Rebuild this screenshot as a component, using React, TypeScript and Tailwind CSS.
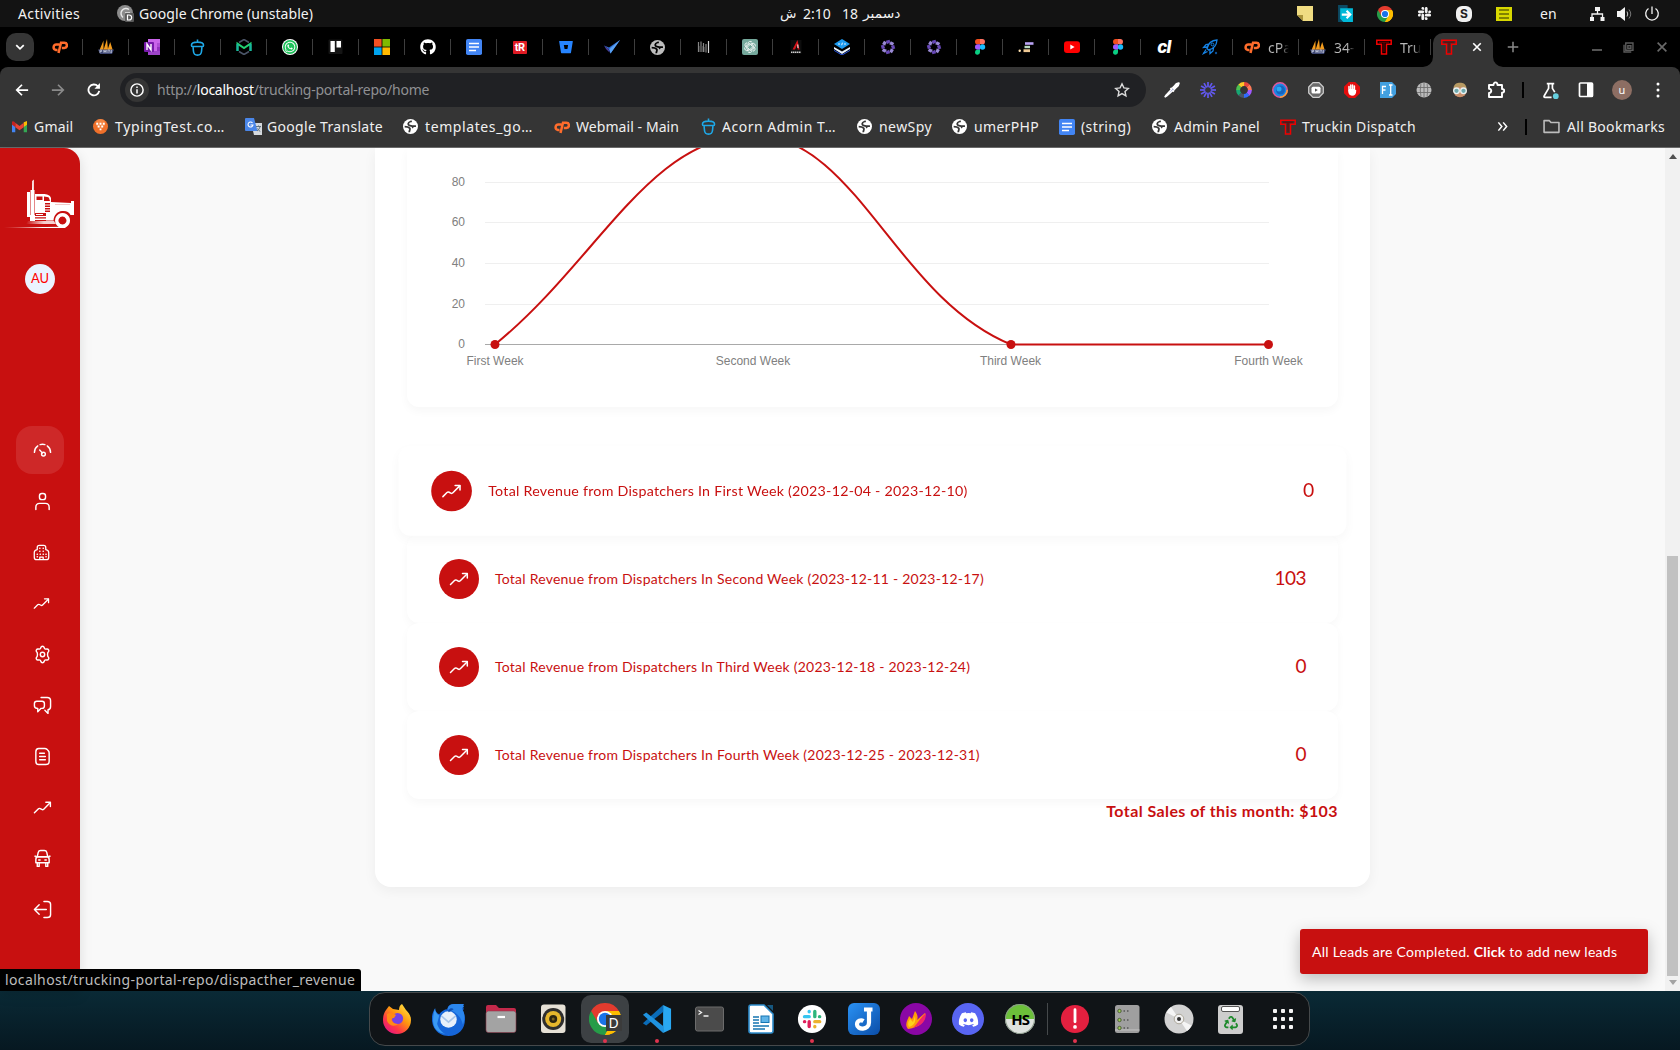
import React from "react";
import type { ReactNode } from "react";
import { FaWhatsapp, FaGithub, FaBitbucket, FaDiscord, FaRecycle, FaSlack } from "react-icons/fa";

type P = { s?: number; vb?: string; children?: ReactNode; className?: string };
const S = ({ s = 16, vb = "0 0 16 16", children, className = "" }: P) => (
  <svg width={s} height={s} viewBox={vb} fill="none" className={`shrink-0 ${className}`}>{children}</svg>
);

/* ---------- favicons ---------- */
const CP = () => (
  <S><path d="M7.400 5.600H4.300a2.700 2.700 0 0 0-.7 5.300h1.900M6.500 14 9 3.700h3.300a2.500 2.500 0 0 1 0 5.200h-2.500" stroke="#ff6c2c" strokeWidth="2.500" /></S>
);
const Boat = () => (
  <S>
    <path d="M5.5 1.5 1.5 11h4zM9 0 5.5 11H10zM12.2 3 9.5 11h5.2z" fill="#f29b1d" />
    <path d="M0 10.5h16l-2 4.5H2z" fill="#3d4672" />
    <path d="M2 14v-3h1.6v1.5H2M6 14v-3v1.5h2V11v3M10 14v-3h1.6l.6 3M13.4 11v3" stroke="#c3c8dc" strokeWidth=".8" />
  </S>
);
const OneNote = () => (
  <S>
    <path d="M4 0h12v16H4z" fill="#ca64ea" />
    <path d="M13 4h3v4h-3z" fill="#ae4bd5" /><path d="M13 8h3v4h-3z" fill="#9332bf" /><path d="M4 12h12v4H4z" fill="#7e2fb0" opacity=".6" />
    <rect y="3" width="10" height="10" rx="1" fill="#7719aa" />
    <path d="M3 11V5l4 6V5" stroke="#fff" strokeWidth="1.4" />
  </S>
);
const Acorn = ({ s = 17 }: { s?: number }) => (
  <S s={s}>
    <path d="M8 .5v2.4M2.300 5.800c0-2 1.800-2.900 5.700-2.900s5.700.9 5.700 2.900c0 .9-.5 1.300-1.500 1.300H3.800c-1 0-1.500-.4-1.500-1.300ZM3.800 7.300l.4 4.200c.2 2.400 1.400 3.700 3.800 3.700s3.600-1.300 3.800-3.700l.4-4.200" stroke="#1ea8e7" strokeWidth="1.500" />
  </S>
);
const Mail = () => (
  <S>
    <path d="m3 3.500 5-3 5 3M3 12.500l5 3 5-3" stroke="#4b5568" strokeWidth="1.6" />
    <path d="M1.500 12V4.6L8 9l6.500-4.400V12" stroke="#22d172" strokeWidth="2" /><path d="M1.500 12V5M14.500 5v7" stroke="#17b3a3" strokeWidth="2" />
  </S>
);
const Windows = () => (
  <S>
    <path d="M0 0h7.600v7.600H0z" fill="#f25022" /><path d="M8.400 0H16v7.600H8.400z" fill="#7fba00" />
    <path d="M0 8.400h7.600V16H0z" fill="#00a4ef" /><path d="M8.400 8.400H16V16H8.400z" fill="#ffb900" />
  </S>
);
const Docs = () => (
  <S><rect width="16" height="16" rx="1.800" fill="#4285f4" /><path d="M3 4.500h10M3 8h10M3 11.500h7" stroke="#fff" strokeWidth="1.700" /></S>
);
const TR = () => (
  <div className="flex h-[13px] w-[14px] shrink-0 items-center justify-center rounded-[1px] bg-[#e01b24] font-['Roboto'] text-[11px] font-bold leading-none tracking-[-0.5px] text-white">tR</div>
);
const Check = () => (
  <S>
    <path d="M0 6.500 5 8.500 16 1 6.500 14.500 4.600 10z" fill="#2f6fd6" /><path d="M5.500 10 16 1 6.500 14.500z" fill="#5aa3f5" /><path d="m0 6.500 4.500 3.300 1.300 4L2 10z" fill="#4a3f9c" />
  </S>
);
const Globe = ({ c, b }: { c: string; b: string }) => (
  <S s={15}>
    <circle cx="8" cy="8" r="8" fill={c} />
    <path d="M9.300 2.300C7.500 3 5.800 3 5.600 5c-.2 1.600 1.400 2.300 3 2.300 1.800 0 2.200 1.400 1.200 2.200M13.800 7.600h-3.400M1.800 8.200c2 0 4 .2 5.300 1.500 1.200 1.200-.4 2.300-.4 4.300" stroke={b} strokeWidth="1.900" />
  </S>
);
const Lines = () => (
  <S><path d="M2.500 3v10M5 2.500v10.500M7.500 4v9M10 5v8.500" stroke="#858585" strokeWidth="1.200" /><path d="M3.800 7v6M6.300 7v6M8.800 8v5" stroke="#484848" /><path d="M12.500 2v12" stroke="#d6d6d6" strokeWidth="1.200" /></S>
);
const OpenAI = () => (
  <S>
    <rect width="16" height="16" rx="2" fill="#75a99c" />
    {[0, 60, 120, 180, 240, 300].map((a) => (
      <path key={a} d="M6 8V4.700a2.300 2.300 0 0 1 4.200-1.300M6 5.500 8.500 4" transform={`rotate(${a} 8 8)`} stroke="#fff" strokeWidth=".8" />
    ))}
  </S>
);
const RedA = () => (
  <S><path d="M2.500 1h11v14h-11z" fill="#0d0d0d" /><path d="M9.500 1 4.500 10.500H7L9 6l.8 4.500h1.700z" fill="#d5151b" /><path d="M9.800 5.500 10 9" stroke="#fff" /><path d="M3 13.300h10" stroke="#cfcfcf" strokeWidth="1.600" strokeDasharray="1.500 .5" /></S>
);
const Stack = () => (
  <S>
    <path d="m0 5 8-5 8 5-8 5z" fill="#1d9bf0" /><path d="m0 8 8 4.600L16 8v2l-8 5-8-5z" fill="#eaf4ff" /><path d="m0 11 8 4.600 8-4.600v.8L8 16.500 0 11.800z" fill="#2f62ff" /><path d="M5.500 4 4.500 5l1 1M10.500 4l1 1-1 1M7.700 6.200l.7-2.500" stroke="#fff" strokeWidth=".9" />
  </S>
);
const Burst = () => (
  <S>
    {[0, 45, 90, 135, 180, 225, 270, 315].map((a) => (
      <path key={a} d="M6.800 5.200 5.900 1.800 9.600.8 10.200 3.600z" transform={`rotate(${a} 8 8)`} fill={a % 90 ? "#9a8ad6" : "#6848b8"} />
    ))}
  </S>
);
const Figma = () => (
  <S>
    <path d="M5.700 0H8v5.300H5.700a2.650 2.650 0 0 1 0-5.300Z" fill="#f24e1e" /><path d="M8 0h2.300a2.650 2.650 0 0 1 0 5.300H8z" fill="#ff7262" />
    <path d="M5.700 5.300H8v5.400H5.700a2.700 2.700 0 0 1 0-5.400Z" fill="#a259ff" /><circle cx="10.500" cy="8" r="2.700" fill="#1abcfe" />
    <path d="M5.700 10.700H8v2.600a2.500 2.500 0 1 1-2.300-2.600Z" fill="#0acf83" />
  </S>
);
const Steps = () => (
  <S><path d="M7 4.500h8.500" stroke="#b9a3f5" strokeWidth="2.600" /><path d="M6.500 8h5.500" stroke="#b8d8c0" strokeWidth="2.400" /><path d="M5.500 11.700H12" stroke="#efc994" strokeWidth="2.800" /><circle cx="1.700" cy="11.700" r="1.200" fill="#ffe2b0" /></S>
);
const YouTube = () => (
  <S><rect y="2.200" width="16" height="11.800" rx="3" fill="#f00" /><path d="m6.300 5.600 4.300 2.500-4.300 2.500z" fill="#fff" /></S>
);
const CL = () => <span className="w-4 shrink-0 text-center font-['Inter'] text-[17px] font-extrabold italic leading-none tracking-[-1px] text-white">cl</span>;
const Rocket = () => (
  <S>
    <path d="M5 9.500C6 5 9 1.500 15 1c-.5 6-4 9-8.500 10zM5 8 1.500 8.500 4 5.500l2.500-.3M8 11v3.500l3-2.500.5-3M4 10.500 1.500 14.500l4-2" stroke="#1683e6" strokeWidth="1.300" />
    <circle cx="10.500" cy="5.500" r="1.400" stroke="#1683e6" /><circle cx="14" cy="14" r="1.200" fill="#0d4f94" />
  </S>
);
const TLogo = () => (
  <S><path d="M.8 1.200h14.400v4h-4.700V15h-5V5.200H.8z" stroke="#f00000" strokeWidth="1.500" /><path d="M3 3.200h10M8 3.500V13" stroke="#7a0000" strokeWidth="1" /></S>
);
const Trello = () => (
  <S><rect x=".5" y=".5" width="14" height="14.500" rx="1" fill="#151515" /><path d="M2.500 2h4.300v11H2.500zM8.500 2h4.500v6.500H8.500z" fill="#fff" /></S>
);

const tabs: ReactNode[] = [
  <CP />, <Boat />, <OneNote />, <Acorn />, <Mail />,
  <span className="flex size-4 items-center justify-center rounded-full bg-white"><FaWhatsapp size={14} color="#fff" className="rounded-full bg-[#1fc15b] p-px" /></span>,
  <Trello />, <Windows />, <FaGithub size={16} color="#fff" />, <Docs />, <TR />, <FaBitbucket size={14} color="#2684ff" />, <Check />,
  <Globe c="#bdbdbd" b="#000" />, <Lines />, <OpenAI />, <RedA />, <Stack />, <Burst />, <Burst />, <Figma />, <Steps />, <YouTube />, <Figma />, <CL />, <Rocket />,
];

/* ---------- top bars ---------- */
const ChromeLogo = ({ s = 16 }: { s?: number }) => (
  <S s={s} vb="0 0 32 32">
    <path d="M16 16 2.140 8A16 16 0 0 1 29.860 8Z" fill="#e33b2e" /><path d="M16 16 29.860 8A16 16 0 0 1 16 32Z" fill="#fdbd00" /><path d="M16 16 16 32A16 16 0 0 1 2.140 8Z" fill="#269c48" />
    <path d="M2.140 8 9.100 20 16 8z" fill="#e33b2e" /><path d="m9.100 20 6.900 12L22.900 20z" fill="#269c48" /><path d="M22.900 20 16 32a16 16 0 0 0 13.860-24H16z" fill="#fdbd00" />
    <circle cx="16" cy="16" r="8" fill="#fff" /><circle cx="16" cy="16" r="6.200" fill="#1a73e8" />
  </S>
);

const TopBar = () => (
  <div className="grid h-[27px] grid-cols-[780px_1fr_383px] items-center bg-[#131313] font-['Noto_Sans'] text-[#f2f2f2]">
    <div className="flex items-center pl-[18px]">
      <span className="w-[62px] whitespace-nowrap text-[14px] tracking-[0.37px]">Activities</span>
      <S s={17} vb="0 0 17 17" className="ml-[37px]">
        <circle cx="8" cy="8" r="8" fill="#8c8c8c" /><path d="M12 4.500A5 5 0 1 0 6 12.500M8 8h5" stroke="#e8e8e8" strokeWidth="1.400" /><rect x="8" y="8" width="9" height="9" rx="1" fill="#5a5a5a" /><path d="M10.500 10h1.500c3.500 0 3.500 5 0 5h-1.500z" stroke="#fff" strokeWidth="1.200" />
      </S>
      <span className="ml-[5px] whitespace-nowrap text-[14px] tracking-[0.07px]">Google Chrome (unstable)</span>
    </div>
    <div className="flex items-center whitespace-nowrap pb-px text-[14px]">
      <span className="w-[23px] font-['DejaVu_Sans'] text-[13.500px]">ش</span>
      <span className="w-[39px]">2:10</span>
      <span className="w-[21px]">18</span>
      <span className="font-['DejaVu_Sans'] text-[13.800px] tracking-normal">دسمبر</span>
    </div>
    <div className="flex items-center">
      <S><path d="M0 0h16v15H6L0 9z" fill="#f0dc82" /><path d="M0 9h6v6z" fill="#a8923a" /></S>
      <S s={17} className="ml-6"><path d="M1 0h9v16H1z" fill="#0c4a63" /><path d="M3 3h12v13H6l-3-3z" fill="#00b9d8" /><path d="M4.500 9H12M9 5.500 12.500 9 9 12.500" stroke="#fff" strokeWidth="2" /></S>
      <div className="ml-[23px] flex"><ChromeLogo /></div>
      <FaSlack size={15} color="#f2f2f2" className="ml-6" />
      <div className="ml-6 flex size-4 items-center justify-center rounded-[6px] bg-[#f0f0f0]"><span className="font-['Inter'] text-[12px] font-bold leading-none text-[#222]">S</span></div>
      <S className="ml-6"><path d="M0 1h16v14H0z" fill="#d8d800" /><path d="M3 4h10M3 8h10M3 12h10" stroke="#2c2c00" strokeWidth="1.200" /></S>
      <span className="ml-7 w-[17px] text-[14px]">en</span>
      <S className="ml-[32px]"><path d="M6 1h5v4H6zM1 11h4v4H1zM11.500 11h4v4h-4z" fill="#f2f2f2" /><path d="M8.500 5v3M3 11V8h10.500v3" stroke="#f2f2f2" strokeWidth="1.300" /></S>
      <S className="ml-[12px]"><path d="M0 5h3l5-4v14l-5-4H0z" fill="#f2f2f2" /><path d="M10 5.500q1.500 2.500 0 5" stroke="#c5c5c5" /><path d="M12 3.500q3.500 4.500 0 9" stroke="#777" /></S>
      <S className="ml-[11px]"><path d="M4.500 2.500a6.300 6.300 0 1 0 7 0M8 .5V8" stroke="#f2f2f2" strokeWidth="1.300" /></S>
    </div>
  </div>
);

const LabelTab = ({ icon, text }: { icon: ReactNode; text: string }) => (
  <div className="flex w-[66px] items-center pl-[11px]">
    {icon}
    <span className="ml-[8px] w-[26px] whitespace-nowrap bg-gradient-to-r from-[#b8b8b8] from-50% to-transparent to-80% bg-clip-text font-['Noto_Sans'] text-[14px] text-transparent">{text}</span>
    <span className="ml-auto h-4 w-[1.500px] bg-[#3e3e3e]" />
  </div>
);

const TabStrip = () => (
  <div className="flex h-10 bg-black">
    <div className="ml-[6px] mt-[6px] flex h-7 w-7 items-center justify-center rounded-[10px] bg-[#353535]">
      <S s={10}><path d="m2 5 6 6 6-6" stroke="#fff" strokeWidth="2.800" /></S>
    </div>
    <div className="ml-[3px] flex">
      {tabs.map((t, i) => (
        <div key={i} className="flex w-[46px] items-center justify-center">
          <div className="flex flex-1 items-center justify-center pl-[1px]">{t}</div>
          <span className="h-4 w-[1.500px] shrink-0 bg-[#3e3e3e]" />
        </div>
      ))}
      <LabelTab icon={<CP />} text="cPa" />
      <LabelTab icon={<Boat />} text="34-" />
      <LabelTab icon={<TLogo />} text="Tru" />
    </div>
    <div className="relative mt-[6px] ml-[2px] flex w-[60px] items-center rounded-t-[10px] bg-[#353535] pl-[8px]">
      <svg className="absolute bottom-0 -left-[10px]" width="10" height="10"><path d="M10 0v10H0A10 10 0 0 0 10 0Z" fill="#353535" /></svg>
      <svg className="absolute bottom-0 -right-[10px]" width="10" height="10"><path d="M0 0v10h10A10 10 0 0 1 0 0Z" fill="#353535" /></svg>
      <div className="mb-[6px] flex items-center"><TLogo /><S s={10} className="ml-[15px]"><path d="m2 2 12 12M14 2 2 14" stroke="#fff" strokeWidth="2.600" /></S></div>
    </div>
    <div className="flex items-center">
      <S s={12} className="ml-[14px]"><path d="M8 1v14M1 8h14" stroke="#8a8a8a" strokeWidth="2" /></S>
      <S s={10} className="ml-[73px] mt-[6px]"><path d="M0 8h16" stroke="#5a5a5a" strokeWidth="3" /></S>
      <S s={11} className="ml-[21px]"><path d="M4 1.500h10.500V12H4zM1.500 4v10.500H12M7 5.500h4.500V9H7z" stroke="#5a5a5a" strokeWidth="2" /></S>
      <S s={10} className="ml-[23px]"><path d="m1 1 14 14M15 1 1 15" stroke="#6a6a6a" strokeWidth="2.600" /></S>
    </div>
  </div>
);

const extensions: ReactNode[] = [
  <S><path d="M6.500 6 10 9.500M8.500 5 11 7.500" stroke="#fff" strokeWidth="2" /><path d="m9.500 5.500 3-3.500L14.800 1.200 14 3.500 10.500 6.700z" fill="#fff" stroke="#fff" strokeWidth="2" strokeLinejoin="round" /><path d="M8.300 6.500 2 13.200.8 15.200l2-1.200 6.700-6" fill="#3f51b5" stroke="#fff" strokeWidth="1.500" /></S>,
  <S>{[0, 30, 60, 90, 120, 150, 180, 210, 240, 270, 300, 330].map((a) => <path key={a} d="M8 5.200V0" transform={`rotate(${a} 8 8)`} stroke="#6259f0" strokeWidth="1.700" />)}</S>,
  <S>{["#e8453c", "#ff7a59", "#a259ff", "#2f6bff", "#4a5568", "#17a673", "#4cc04f", "#ffca28"].map((c, i) => <path key={c} d="M8 2.100A5.900 5.900 0 0 1 12.300 3.900" transform={`rotate(${i * 45} 8 8)`} stroke={c} strokeWidth="4" />)}</S>,
  <S><circle cx="8" cy="8" r="7.200" fill="#1e88e5" stroke="#e0589a" strokeWidth="1.500" /><path d="M8 15.200A7.200 7.200 0 0 0 15.200 8" stroke="#f6a33c" strokeWidth="1.500" /><circle cx="8.500" cy="8" r="4.500" fill="#1565c0" /><circle cx="7" cy="7" r="2.500" fill="#29a9f2" /></S>,
  <S><path d="M5 .7h6L15.300 5v6L11 15.300H5L.7 11V5z" fill="#6b6b6b" stroke="#d0d0d0" strokeWidth="1.200" /><rect x="3.500" y="4.800" width="9" height="6.600" rx="1.500" fill="#fff" /><path d="m7 6.500 2.800 1.600L7 9.700z" fill="#555" /></S>,
  <S><path d="M4.800 0h6.400L16 4.800v6.400L11.200 16H4.800L0 11.200V4.800z" fill="#e40d0d" /><path d="M5 8V4.500M6.800 8V3M8.600 8V3M10.400 8V4M4.800 8.500C5 11 6 13 8 13c2.500 0 3.500-2 3.500-4.500" stroke="#fff" strokeWidth="1.500" strokeLinecap="round" /><path d="M5 7h6v4l-2 2H7l-2-2z" fill="#fff" /></S>,
  <S><path d="M0 0h12l4 4v8l-4 4H0z" fill="#42a0e0" /><path d="M2.500 12V4.500H6M2.500 8H5.500M9 3h3.500M9 13H12.500M10.700 3v10" stroke="#fff" strokeWidth="1.300" /></S>,
  <S><circle cx="8" cy="8" r="7.500" fill="#bcbcbc" /><path d="M1 5.500h14M1 10.500h14M8 1v14M5 1.500Q3.500 8 5 14.500M11 1.500q1.500 6.500 0 13" stroke="#6f6f6f" strokeWidth=".9" /></S>,
  <S><circle cx="8" cy="8.500" r="6.800" fill="#c98f6b" /><path d="M1.500 6C2 2 5 .8 8 .8S14 2 14.500 6Q8 3.500 1.500 6Z" fill="#b79a63" /><circle cx="4.500" cy="8.800" r="2.800" fill="#6fa9ae" stroke="#e9f2f2" strokeWidth="1.300" /><circle cx="11.500" cy="8.800" r="2.800" fill="#6fa9ae" stroke="#e9f2f2" strokeWidth="1.300" /></S>,
  <S s={18} vb="0 0 18 18"><path d="M2 4h4.500c0-3.500 4-3.500 4 0H15v4c3 0 3 3.600 0 3.600V16H2v-4c3 0 3-4.300 0-4.300z" stroke="#fff" strokeWidth="1.900" strokeLinejoin="round" /></S>,
];

const Toolbar = () => (
  <div className="bg-black">
    <div className="flex h-[46px] items-center rounded-t-[8px] bg-[#353535]">
      <S s={14} className="ml-[15px]"><path d="M15 8H2M8 2 2 8l6 6" stroke="#fff" strokeWidth="2" /></S>
      <S s={14} className="ml-[22px]"><path d="M1 8h13M8 2l6 6-6 6" stroke="#8a8a8a" strokeWidth="2" /></S>
      <S s={14} className="ml-[22px]"><path d="M14 9a6.200 6.200 0 1 1-1.500-5.200" stroke="#fff" strokeWidth="2.100" /><path d="M14.800 0v6.500H8.500z" fill="#fff" /></S>
      <div className="ml-[19px] flex h-[34px] w-[1026px] items-center rounded-full bg-[#202124] pl-[5px]">
        <div className="flex size-6 items-center justify-center rounded-full bg-[#353535]"><S s={14}><circle cx="8" cy="8" r="7" stroke="#fff" strokeWidth="1.700" /><path d="M8 7v5M8 4v1.800" stroke="#fff" strokeWidth="1.700" /></S></div>
        <span className="ml-2 whitespace-nowrap pb-[2px] font-['Noto_Sans'] text-[14px] tracking-[-0.25px] text-[#8f9093]">http://<span className="text-white">localhost</span>/trucking-portal-repo/home</span>
        <S s={16} className="ml-auto mr-4"><path d="m8 1.800 1.900 4.100 4.400.5-3.300 3 .9 4.400L8 11.600l-3.900 2.200.9-4.400-3.300-3 4.400-.5z" stroke="#dcdcdc" strokeWidth="1.400" /></S>
      </div>
      <div className="ml-2 flex">
        {extensions.map((e, i) => <div key={i} className="flex w-9 items-center justify-center">{e}</div>)}
      </div>
      <span className="ml-[8px] h-4 w-[2px] bg-black" />
      <S s={17} className="ml-[18px]"><path d="M4.500 1.500h7M6.200 1.500V6L2 13.200c-.4.800 0 1.300.8 1.300H9M9.800 1.500V6L12 9.500" stroke="#fff" strokeWidth="1.600" /><circle cx="13" cy="13.300" r="2.700" fill="#66d0df" /></S>
      <S s={16} className="ml-[19px]"><rect x="1.500" y="1" width="13" height="13.500" rx="1" stroke="#fff" strokeWidth="1.700" /><path d="M9 1h5.500v13.500H9z" fill="#fff" /></S>
      <div className="ml-[18px] flex size-5 items-center justify-center rounded-full bg-[#8d6e63] pb-px font-['Noto_Sans'] text-[11px] leading-none text-white">u</div>
      <S s={16} className="ml-[18px]"><circle cx="8" cy="2" r="1.500" fill="#fff" /><circle cx="8" cy="8" r="1.500" fill="#fff" /><circle cx="8" cy="14" r="1.500" fill="#fff" /></S>
    </div>
  </div>
);

const Gmail = () => (
  <S s={15}><path d="M0 3v11h3.500V6z" fill="#4285f4" /><path d="M16 3v11h-3.500V6z" fill="#34a853" /><path d="M12.500 3.500 16 2v4l-3.500 2.500z" fill="#fbbc04" /><path d="M3.500 4 8 7.500 12.500 4v4.700L8 12 3.500 8.700z" fill="#ea4335" /><path d="M0 3q1-1.500 3.500.9v4.700L0 6z" fill="#c5221f" /></S>
);
const Typing = () => (
  <S s={15}><circle cx="8" cy="8" r="8" fill="#f0702a" /><circle cx="8" cy="5" r="5" fill="#f79a5a" opacity=".5" /><path d="M3.500 5h2M7 5h2M10.500 5h2M5 8h2M8.800 8h2M7 11h2" stroke="#fff" strokeWidth="2" /></S>
);
const Translate = () => (
  <S s={17} vb="0 0 17 17"><path d="M6 5h11v12H9z" fill="#d5d9dd" /><path d="M1 0h8l3.500 13H1a1 1 0 0 1-1-1V1a1 1 0 0 1 1-1Z" fill="#4a86e8" /><path d="M7.500 5A2.500 2.500 0 1 0 8 7H5.500" stroke="#fff" strokeWidth="1.100" /><path d="M11 8.500h5M13.500 7.500v1M15 9q-1 3-3 4M12.500 10.500q1 2 2.800 3" stroke="#5f7381" /></S>
);

const W = () => <Globe c="#fff" b="#353535" />;
const Bookmark = ({ icon, text, w, t }: { icon: ReactNode; text: string; w: string; t: string }) => (
  <div className={`flex items-center ${w}`}>
    <div className="flex w-[22px] shrink-0 items-center">{icon}</div>
    <span className={`whitespace-nowrap ${t}`}>{text}</span>
  </div>
);
const Bookmarks = () => (
  <div className="flex h-[35px] items-center border-b border-[#6a6a6a] bg-[#353535] pb-[7px] pl-3 font-['Noto_Sans'] text-[14px] text-[#f0f0f0]">
    <Bookmark icon={<Gmail />} text="Gmail" w="w-[81px]" t="tracking-[0.2px]" />
    <Bookmark icon={<Typing />} text="TypingTest.co…" w="w-[152px]" t="tracking-[0.67px]" />
    <Bookmark icon={<Translate />} text="Google Translate" w="w-[158px]" t="tracking-[0.31px]" />
    <Bookmark icon={<W />} text="templates_go…" w="w-[151px]" t="tracking-[0.6px]" />
    <Bookmark icon={<CP />} text="Webmail - Main" w="w-[146px]" t="tracking-[0.07px]" />
    <Bookmark icon={<Acorn />} text="Acorn Admin T…" w="w-[157px]" t="tracking-[0.52px]" />
    <Bookmark icon={<W />} text="newSpy" w="w-[95px]" t="tracking-[0.43px]" />
    <Bookmark icon={<W />} text="umerPHP" w="w-[107px]" t="tracking-[0.32px]" />
    <Bookmark icon={<Docs />} text="(string)" w="w-[93px]" t="tracking-[0.4px]" />
    <Bookmark icon={<W />} text="Admin Panel" w="w-[128px]" t="tracking-[0.27px]" />
    <Bookmark icon={<TLogo />} text="Truckin Dispatch" w="w-[217px]" t="tracking-[0.31px]" />
    <S s={11}><path d="m2 2 5 6-5 6M9 2l5 6-5 6" stroke="#fff" strokeWidth="2.200" /></S>
    <span className="ml-[17px] h-4 w-[2px] bg-black" />
    <S s={17} className="ml-[16px] mr-[7px]"><path d="M1 13.500v-11h5l1.500 1.800H15v9.200z" stroke="#bdbdbd" strokeWidth="1.500" strokeLinejoin="round" /></S>
    <span className="whitespace-nowrap tracking-[0.29px]">All Bookmarks</span>
  </div>
);

/* ---------- sidebar ---------- */
const Nav = ({ children, s = 19, className = "" }: { children: ReactNode; s?: number; className?: string }) => (
  <svg width={s} height={s} viewBox="0 0 20 20" fill="none" stroke="#fff" strokeWidth="1.500" strokeLinecap="round" strokeLinejoin="round" className={className}>{children}</svg>
);
const Trend = () => (
  <><path d="M1.500 15.500 5.500 11.500C6.100 10.900 6.900 10.800 7.600 11.200L9.200 12.100C9.900 12.500 10.700 12.400 11.300 11.800L18 5" /><path d="M13.500 4.500H18.300V9" /></>
);
const navItems: ReactNode[] = [
  <Nav><path d="M5 5.200A8.500 8.500 0 0 0 1.500 12M7.500 3.800a9 9 0 0 1 5 0M15 5.200A8.500 8.500 0 0 1 18.500 12M7 9.500l2.800 3" /><circle cx="11" cy="13.800" r="2" /></Nav>,
  <Nav><rect x="6.800" y="1.500" width="6.400" height="6.500" rx="2.600" /><path d="M3 18.500V16c0-2.500 1.300-4 4-4h6c2.700 0 4 1.500 4 4v2.500" /></Nav>,
  <Nav s={17} className="-ml-[2px]"><path d="M5 6.500V4c0-1.800.7-2.500 2.500-2.500h5C14.300 1.500 15 2.200 15 4v2.500C17.500 7 18.500 8 18.500 10v5.500c0 2-1 3-3 3h-11c-2 0-3-1-3-3V10C1.500 8 2.500 7 5 6.500ZM8 18v-2.500h4V18" /><path d="M8 5h.1M12 5h.1M8 8.500h.1M12 8.500h.1M5 12h.1M8.500 12h.1M12 12h.1M15.300 12h.1M5 15h.1M15.300 15h.1" strokeWidth="1.900" /></Nav>,
  <Nav s={17} className="-ml-[2px]"><Trend /></Nav>,
  <Nav><path d="M8.300 2.600C8.700 1 11.300 1 11.700 2.600c.3 1.500 1.300 2.100 2.700 1.600 1.700-.5 3 1.700 1.800 2.900-1.200 1.100-1.200 4.700 0 5.800 1.200 1.200-.1 3.400-1.800 2.900-1.400-.5-2.400.1-2.700 1.600-.4 1.600-3 1.600-3.400 0-.3-1.500-1.300-2.100-2.700-1.600-1.700.5-3-1.700-1.800-2.900 1.200-1.100 1.200-4.700 0-5.800C2.600 5.900 3.900 3.700 5.600 4.200 7 4.700 8 4.100 8.300 2.600Z" /><circle cx="10" cy="10" r="2.300" /></Nav>,
  <Nav><path d="M8.500 1.500H15c2.700 0 3.500.8 3.500 3.500v6c0 2.500-.8 3.300-2.700 3.500v3.800L12.500 15" /><path d="M4 5.500h5.500c1.800 0 2.500.7 2.500 2.500v2.500c0 1.800-.7 2.500-2.500 2.500H8.500L5 16.500V13c-2.700 0-3.500-.7-3.500-2.500V8c0-1.800.7-2.500 2.500-2.500Z" /></Nav>,
  <Nav><path d="M6 1.500h6.500c1 0 1.500.3 2.300 1l1.500 1.700c.5.600.7 1.100.7 2V15c0 2.500-1 3.500-3.500 3.500H6c-2 0-3-1-3-3.500V5c0-2.500 1-3.500 3-3.500ZM7 6.500h5M7 10h6M7 13.500h6" /></Nav>,
  <Nav><Trend /></Nav>,
  <Nav><path d="M4.500 8 5.500 3.500C5.900 2 6.700 1.500 8 1.500h4c1.300 0 2.100.5 2.500 2L15.500 8M3 8.500h14M3 11c0-1.800.7-2.800 2.500-2.800h9C16.300 8.200 17 9.200 17 11v3.500H3zM4.500 14.500v3.800h2v-3.800M13.500 14.500v3.800h2v-3.800M6 11.500h1.500M12.500 11.500H14M2 7.500h1M17 7.500h1" /></Nav>,
  <Nav><path d="M11.500 1.500H15c2.500 0 3.500 1 3.500 3v11c0 2-1 3-3.500 3h-3.500M14 10H1.500M6.500 5 1.500 10l5 5" /></Nav>,
];

const Truck = () => (
  <svg width="80" height="60" viewBox="0 0 80 60" className="mt-[27px] shrink-0" fill="#fff">
    <defs><linearGradient id="road"><stop offset="0" stopColor="#fff" stopOpacity="0" /><stop offset=".6" stopColor="#fff" /></linearGradient></defs>
    <path d="M32.200 6 33.800 4.500V45h-2.200z" /><path d="M27 17h3v25h-3zM30.500 15h4v26h-4z" />
    <path d="M30 40h5v6h-5z" />
    <path fillRule="evenodd" d="M35 19h8c4 0 7 1 8 4v4l20 1v-2h3v14h-3.500C69 36.500 66 35.500 62 36c-5 .5-8 4-8.500 9.500H46V38H35zM36.500 21.500V25h6v-3.500zM44 21.500V26h6l-1-3q-1-1.500-5-1.500ZM45 28v9h5v-9z" />
    <path d="M45 29.500h5v1h-5zM45 32h5v1h-5zM45 34.500h5v1h-5zM36 39h7v1h-7zM35 41h11v1.200H35zM35 43.500h13V45H35z" />
    <path d="M28 46h26q1 2 2 3H26z" fill="url(#road)" opacity=".8" />
    <path fillRule="evenodd" d="M62.500 38a7.500 7.500 0 1 0 .1 0Zm0 3.600a4 4 0 1 1-.1 0Z" />
    <path d="M4 52.500 66 51.800l-1 1.200H4z" fill="url(#road)" />
    <path d="M55 29.500h15" stroke="#e9a3a3" strokeWidth=".6" />
  </svg>
);

const Sidebar = () => (
  <aside className="flex w-20 shrink-0 flex-col items-center rounded-tr-[16px] bg-[#c81010] shadow-[0_4px_13px_rgba(0,0,0,0.12)]">
    <Truck />
    <div className="mt-[29px] flex size-[30px] shrink-0 items-center justify-center rounded-full bg-[#ebf3ff] font-['Lato'] text-[13px] text-[#f00]">AU</div>
    <nav className="mt-[132px] flex flex-col items-center">
      {navItems.map((icon, i) => (
        <div key={i} className={i === 0 ? "mb-[3px] flex size-12 items-center justify-center rounded-[16px] bg-white/10 pl-1" : "mb-[3.100px] flex size-12 items-center justify-center pl-1"}>{icon}</div>
      ))}
    </nav>
  </aside>
);

/* ---------- page ---------- */
const CHART_TICKS = [
  { v: "80", y: 34.500 }, { v: "60", y: 74.500 }, { v: "40", y: 115.500 }, { v: "20", y: 156.500 },
];
const Chart = () => (
  <svg width="931" height="259" viewBox="407 148 931 259" className="font-['Liberation_Sans'] text-[12px]">
    {CHART_TICKS.map((t) => (
      <g key={t.v}>
        <path d={`M485 ${t.y + 148}H1269`} stroke="#efefef" />
        <text x="465" y={t.y + 151.500} textAnchor="end" fill="#808080">{t.v}</text>
      </g>
    ))}
    <path d="M485 344.500H1269" stroke="#a9a9a9" />
    <text x="465" y="347.500" textAnchor="end" fill="#808080">0</text>
    <path d="M495 344.500C598 260.800 650 135.300 753 135.300C856 135.300 895 297 1011 344.500C1101 344.500 1166 344.500 1269 344.500" stroke="#c81010" strokeWidth="2" fill="none" />
    {[495, 1011, 1268.500].map((x) => <circle key={x} cx={x} cy="344.500" r="4.500" fill="#c81010" />)}
    {[["First Week", 495], ["Second Week", 753], ["Third Week", 1010.500], ["Fourth Week", 1268.500]].map(([l, x]) => (
      <text key={l} x={x} y="364.500" textAnchor="middle" fill="#808080">{l}</text>
    ))}
  </svg>
);

const rows = [
  ["Total Revenue from Dispatchers In First Week (2023-12-04 - 2023-12-10)", "0"],
  ["Total Revenue from Dispatchers In Second Week (2023-12-11 - 2023-12-17)", "103"],
  ["Total Revenue from Dispatchers In Third Week (2023-12-18 - 2023-12-24)", "0"],
  ["Total Revenue from Dispatchers In Fourth Week (2023-12-25 - 2023-12-31)", "0"],
];

const Main = () => (
  <main className="relative flex flex-1 flex-col overflow-hidden">
    <section className="ml-[295px] h-[739px] w-[995px] rounded-b-[16px] bg-white px-8 shadow-[0_4px_13px_rgba(0,0,0,0.05)]">
      <div className="h-[259px] rounded-b-[12px] shadow-[0_4px_10px_rgba(0,0,0,0.035)]"><Chart /></div>
      <div className="pt-[40px]">
        {rows.map(([label, value], i) => (
          <div key={label} className={`relative flex h-[88px] items-center rounded-[12px] bg-white px-8 text-[#c81010] shadow-[0_4px_10px_rgba(0,0,0,0.03)] ${i === 0 ? "z-10 scale-[1.018]" : ""}`}>
            <div className="flex size-10 items-center justify-center rounded-full bg-[#c81010]"><Nav s={20}><Trend /></Nav></div>
            <span className="ml-4 whitespace-nowrap pb-[2px] font-['Lato'] text-[14px] tracking-[0.235px]">{label}</span>
            <span className="ml-auto pb-[2px] font-['Lato'] text-[19px] tracking-[-0.5px]">{value}</span>
          </div>
        ))}
      </div>
      <p className="text-right font-['Lato'] text-[16px] font-bold leading-6 tracking-[0.42px] text-[#c81010]">Total Sales of this month: $103</p>
    </section>
    <div className="absolute right-[17px] bottom-[17px] flex h-[45px] w-[348px] items-center whitespace-pre rounded-[3px] bg-[#c81010] pl-3 font-['Lato'] text-[14px] tracking-[0.260px] text-white shadow-[0_5px_16px_rgba(0,0,0,0.25)]">
      All Leads are Completed. <b>Click</b> to add new leads
    </div>
  </main>
);

const Scrollbar = () => (
  <div className="flex w-[15px] shrink-0 flex-col items-center justify-between bg-[#f1f1f1] py-[6px]">
    <svg width="8" height="5"><path d="M0 5 4 0l4 5z" fill="#505050" /></svg>
    <div className="mt-auto mb-[4px] h-[420px] w-[11px] bg-[#c1c1c1]" />
    <svg width="8" height="5"><path d="M0 0h8L4 5z" fill="#a3a3a3" /></svg>
  </div>
);

/* ---------- dock ---------- */
const D = ({ children, s = 32 }: { children: ReactNode; s?: number }) => <svg width={s} height={s} viewBox="0 0 32 32" fill="none">{children}</svg>;
const dockLeft: { icon: ReactNode; dot?: boolean; active?: boolean }[] = [
  { icon: <D>
    <defs><linearGradient id="ff" x1="1" y1="0" x2=".2" y2="1"><stop stopColor="#fff44f" /><stop offset=".45" stopColor="#ff980e" /><stop offset=".75" stopColor="#ff3647" /><stop offset="1" stopColor="#e31587" /></linearGradient></defs>
    <path d="M5 7c-2 3-3 6-3 10a14 14 0 0 0 28 0c0-5-3-8-5-10l-4-6c-2 1-3 3-3 6l-6-1-4-3z" fill="url(#ff)" /><circle cx="16.500" cy="15.500" r="5.600" fill="#7542e5" /><path d="M6 11c3-2 6-1 9 1l-2 3c-2 0-3 1-2 3s3 3 6 3c-3 3-9 2-11-3z" fill="#ff8a16" />
  </D> },
  { icon: <D s={33}>
    <path d="M3 5C-1 11-1 18 2 24c3 5 8 8 14 8 10 0 16-7 16-16 0-4-1-7-3-9l2-1-1-2h1l-1-3h-9c-4 0-6 3-6 5-3 0-6 2-8 5C5 10 3 8 3 5Z" fill="#1565d8" /><path d="M15 6c1-4 4-5 7-5h9l-1 2h1l-2 2 1 2c2 4 2 9 0 14-2-8-7-13-15-15Z" fill="#2b86ec" /><path d="M3 5c0 4 2 6 4 7l-2 8c1 4 4 8 8 10C5 29 1 24 1 17 1 12 2 8 3 5Z" fill="#3a9bf5" /><circle cx="16" cy="16" r="8" fill="#e8f0fa" /><path d="m9 12.500 7 6 7-6" stroke="#a9c6ea" strokeWidth="1.600" /><path d="M16 9c-1-3 3-5 5-3" fill="#0f4fb0" />
  </D> },
  { icon: <D><path d="M1 4a2 2 0 0 1 2-2h8l3 3h15a2 2 0 0 1 2 2v6H1z" fill="#c3294a" /><rect x="1" y="8" width="30" height="21.500" rx="2.500" fill="#a3a3a3" stroke="#8d3b4c" strokeWidth=".6" /><path d="M12.500 14h7.500" stroke="#fff" strokeWidth="2.200" /></D> },
  { icon: <D><rect x="4" y="1.500" width="24.500" height="28.500" rx="3" fill="#e6e1d6" /><circle cx="16.200" cy="16" r="11" fill="#2e2e2e" /><circle cx="16.200" cy="16" r="8" fill="#e5b62c" /><circle cx="16.200" cy="16" r="4" fill="#2b2410" /><circle cx="16.200" cy="16" r="1.500" fill="#7a6320" /></D> },
  { icon: <div className="relative flex"><ChromeLogo s={32} /><span className="absolute -right-px bottom-[4px] flex h-4 w-4 items-center justify-center bg-[#3b3b3b] font-['Noto_Sans'] text-[14px] leading-none text-white">D</span></div>, dot: true, active: true },
  { icon: <D s={30}><path d="M22.500 1 31 5v22l-8.500 4z" fill="#29a8f2" /><path d="M22.500 1v7.500L4.500 23 1 20.500z" fill="#0a6cb8" /><path d="M22.500 31v-7.500L4.500 9 1 11.500z" fill="#1f93e0" /></D>, dot: true },
  { icon: <D><rect x="2.500" y="4" width="28" height="24" rx="2" fill="#4b4b4b" stroke="#6c6c6c" /><path d="m5.500 7.500 3 2-3 2M10.500 13h5" stroke="#f2f2f2" strokeWidth="1.300" /></D> },
  { icon: <D><path d="M4 4a2 2 0 0 1 2-2h13l9 9v17a2 2 0 0 1-2 2H6a2 2 0 0 1-2-2z" fill="#fff" stroke="#2d8ccb" strokeWidth="1.600" /><path d="M22 2h6v6z" fill="#16577f" /><path d="M8 14h6M8 17h6M8 20h6M8 23h16M8 26h12" stroke="#1675b1" strokeWidth="1.400" /><rect x="16" y="13" width="8" height="6.500" fill="#5fb4e8" stroke="#1675b1" /></D> },
  { icon: <D s={30}><circle cx="16" cy="16" r="15" fill="#fff" /><path d="M13 8v.2M8 13.500h5" stroke="#36c5f0" strokeWidth="3.600" strokeLinecap="round" /><path d="M19 8v5.500M24 13.500h.2" stroke="#2eb67d" strokeWidth="3.600" strokeLinecap="round" /><path d="M19 18.800h5.200M19 24.200V24" stroke="#ecb22e" strokeWidth="3.600" strokeLinecap="round" /><path d="M13 18.800v5.200M8 18.800h.2" stroke="#e01e5a" strokeWidth="3.600" strokeLinecap="round" /></D>, dot: true },
  { icon: <D><defs><linearGradient id="jp" x1="0" y1="0" x2="1" y2="1"><stop stopColor="#2a92f4" /><stop offset="1" stopColor="#0a4da8" /></linearGradient></defs><rect width="32" height="32" rx="6" fill="url(#jp)" /><path d="M16 6.500h8.500M21 6.500V19.500c0 8-12 7.500-12 2 0-4 4-5 6.500-3.500" stroke="#fff" strokeWidth="4.200" /></D> },
  { icon: <D><circle cx="16" cy="16" r="16" fill="#8a07a5" /><path d="M8 26c-4-5 0-9 1-13l3 3 3-8c3 4 3 7 2 9l8-7c1 7-3 14-17 16Z" fill="#ff9d0a" /><path d="M14 24c4-4 6-9 12-14 0 9-5 13-14 15z" fill="#f2256b" /><path d="M9 24c-2-4 0-6 1-8l3 3 2-6c1 5 0 9-6 11Z" fill="#ffd21a" /></D> },
  { icon: <div className="flex size-8 items-center justify-center rounded-full bg-[#5865f2]"><FaDiscord size={21} color="#fff" /></div> },
  { icon: <div className="flex size-[30px] items-center justify-center rounded-full bg-gradient-to-b from-[#6cc03a] from-50% to-[#dfe3df] to-50% font-['Open_Sans'] text-[15px] font-bold tracking-[-1px] text-black ring-1 ring-[#8a9a8a] ring-inset">HS</div> },
];
const dockRight: { icon: ReactNode; dot?: boolean; active?: boolean }[] = [
  { icon: <D s={30}><circle cx="16" cy="16" r="15" fill="#e3203f" /><path d="M16 6v13" stroke="#fff" strokeWidth="3" strokeLinecap="round" /><circle cx="16" cy="24.500" r="2" fill="#fff" /></D>, dot: true },
  { icon: <D><rect x="4" y="2" width="24.500" height="28" rx="2.500" fill="#9f9f9f" /><path d="M4 27h24.500" stroke="#c4c4c4" />{[8, 17, 25].map((y) => <g key={y}><circle cx="8.500" cy={y} r="1.700" fill="#9ccc52" stroke="#4f5f3a" /><path d={`M12.500 ${y}h1.500M16 ${y}h1.500`} stroke="#555" strokeWidth="1.300" /></g>)}</D> },
  { icon: <D><circle cx="16" cy="16" r="14.500" fill="#d2d2d2" /><path d="M16 16 3.500 9.500A14 14 0 0 1 8 4zM16 16l12.500 6.500A14 14 0 0 1 24 28z" fill="#f5f5f5" /><circle cx="16" cy="16" r="4.800" fill="#f1f1f1" stroke="#aca79a" /><circle cx="16" cy="16" r="2" fill="#333" /></D> },
  { icon: <div className="relative flex h-[29px] w-[25px] flex-col items-center rounded-[3px] bg-[#cdcdcd] pt-[1px]"><div className="h-[6px] w-[19px] rounded-[2px] border border-[#555] bg-white" /><FaRecycle size={14} color="#1e8a2c" className="mt-[4px]" /></div> },
  { icon: <D>{[8, 16, 24].flatMap((x) => [8, 16, 24].map((y) => <rect key={`${x}-${y}`} x={x - 2} y={y - 2} width="4" height="4" rx="1" fill="#f5f5f5" />))}</D> },
];
const DockItem = ({ icon, dot, active }: { icon: ReactNode; dot?: boolean; active?: boolean }) => (
  <div className="relative flex w-[52px] items-center justify-center">
    <div className={active ? "flex size-12 items-center justify-center rounded-[10px] bg-[#3d4144]" : "flex size-12 items-center justify-center"}>{icon}</div>
    {dot && <span className="absolute bottom-0 size-1 rounded-full bg-[#e0334f]" />}
  </div>
);
const Dock = () => (
  <div className="flex h-[59px] bg-gradient-to-b from-[#0a2a36] to-[#061821]">
    <div className="mt-[1px] ml-[369px] flex h-[54px] w-[941px] items-center rounded-[16px] border border-[#45494b] bg-[#101417] pl-px">
      {dockLeft.map((d, i) => <DockItem key={i} {...d} />)}
      <span className="mx-[1px] h-8 w-px bg-[#45494b]" />
      {dockRight.map((d, i) => <DockItem key={i} {...d} />)}
    </div>
  </div>
);

export default function App() {
  return (
    <div className="flex h-[1050px] w-[1680px] flex-col overflow-hidden bg-black">
      <TopBar />
      <TabStrip />
      <Toolbar />
      <Bookmarks />
      <div className="relative flex h-[843px] shrink-0 bg-[#f9f9f9]">
        <Sidebar />
        <Main />
        <Scrollbar />
        <div className="absolute bottom-0 left-0 h-[22px] w-[361px] whitespace-nowrap rounded-tr-[3px] bg-black pl-[5px] font-['Noto_Sans'] text-[14px] leading-[21px] tracking-[0.37px] text-[#bdbdbd]">localhost/trucking-portal-repo/dispacther_revenue</div>
      </div>
      <Dock />
    </div>
  );
}
